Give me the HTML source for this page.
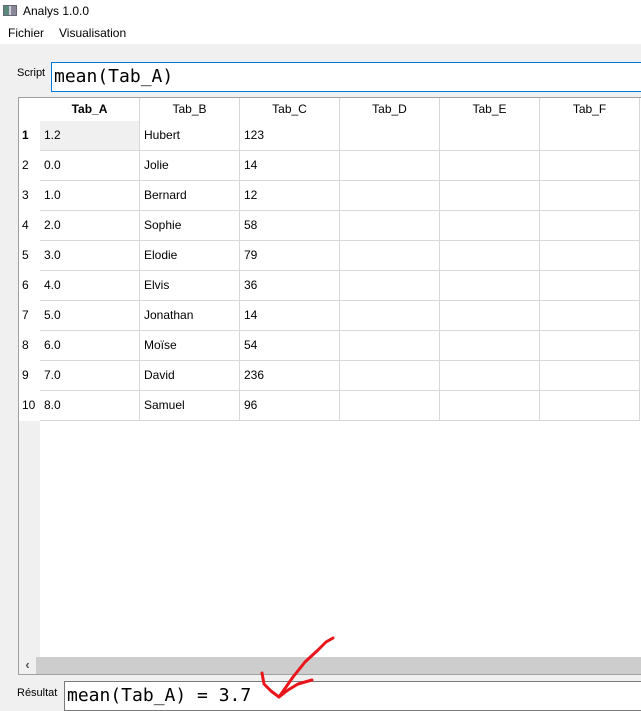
<!DOCTYPE html>
<html><head><meta charset="utf-8"><style>
*{margin:0;padding:0;box-sizing:border-box}
body{width:641px;height:705px;overflow:hidden;background:#f0f0f0;font-family:"Liberation Sans",sans-serif;font-size:12px;color:#000;position:relative}
.abs{position:absolute}
.mono{font-family:"DejaVu Sans Mono","Liberation Mono",monospace;font-size:18px}
.cell{position:absolute;height:30px;border-right:1px solid #d8d8d8;border-bottom:1px solid #d8d8d8;padding-left:4px;line-height:29px;background:#fff}
.hd{position:absolute;top:98px;height:23px;width:100px;text-align:center;line-height:23px;background:#fff;border-right:1px solid #d8d8d8}
.rh{position:absolute;left:19px;width:21px;height:30px;line-height:29px;padding-left:3px;background:#fff}
</style></head><body>
<div class="abs" style="left:0;top:0;width:641px;height:44px;background:#fff"></div>
<div class="abs" style="left:3px;top:5px;width:14px;height:11px;border:1px solid #667;background:linear-gradient(90deg,#5a8a7a 0 40%,#ccd 40% 60%,#889 60%)"></div>
<div class="abs" style="left:23px;top:4px;font-size:12px">Analys 1.0.0</div>
<div class="abs" style="left:8px;top:26px">Fichier</div>
<div class="abs" style="left:59px;top:26px">Visualisation</div>
<div class="abs" style="left:17px;top:67px;font-size:11px">Script</div>
<div class="abs mono" style="left:51px;top:62px;width:595px;height:30px;background:#fff;border:1px solid #0078d7;padding-left:2px;line-height:28px">mean(Tab_A)</div>
<div class="abs" style="left:18px;top:97px;width:630px;height:578px;border:1px solid #a0a0a0;background:#fff"></div>
<div class="abs" style="left:19px;top:421px;width:21px;height:236px;background:#f0f0f0"></div>
<div class="hd" style="left:40px;font-weight:bold">Tab_A</div>
<div class="hd" style="left:140px">Tab_B</div>
<div class="hd" style="left:240px">Tab_C</div>
<div class="hd" style="left:340px">Tab_D</div>
<div class="hd" style="left:440px">Tab_E</div>
<div class="hd" style="left:540px">Tab_F</div>
<div id="g"></div>
<div class="abs" style="left:19px;top:657px;width:622px;height:17px;background:#cdcdcd"></div>
<div class="abs" style="left:19px;top:657px;width:17px;height:17px;background:#f0f0f0;text-align:center;line-height:16px;font-size:13px;color:#555;font-weight:bold">‹</div>
<div class="abs" style="left:17px;top:687px;font-size:11px">Résultat</div>
<div class="abs mono" style="left:64px;top:681px;width:590px;height:30px;background:#fff;border:1px solid #7a7a7a;padding-left:2px;line-height:28px">mean(Tab_A) = 3.7</div>
<svg class="abs" style="left:0;top:0" width="641" height="705"><g fill="none" stroke="#e8151b" stroke-width="3" stroke-linecap="round" stroke-linejoin="round"><path d="M333 638 L326 642 L318 650 L305 662 L293 677 L279 697"/><path d="M262 673 L264 684 L271 691 L279 697 L288 690 L298 684 L312 680"/></g></svg>
<script>
var d=[["1.2","Hubert","123"],["0.0","Jolie","14"],["1.0","Bernard","12"],["2.0","Sophie","58"],["3.0","Elodie","79"],["4.0","Elvis","36"],["5.0","Jonathan","14"],["6.0","Moïse","54"],["7.0","David","236"],["8.0","Samuel","96"]];
var h="";
for(var r=0;r<10;r++){var t=121+r*30;
h+='<div class="rh" style="top:'+t+'px;'+(r==0?'font-weight:bold':'')+'">'+(r+1)+'</div>';
for(var c=0;c<6;c++){var v=c<3?d[r][c]:"";h+='<div class="cell" style="left:'+(40+c*100)+'px;top:'+t+'px;width:100px;'+(r==0&&c==0?'background:#f0f0f0':'')+'">'+v+'</div>';}}
document.getElementById("g").innerHTML=h;
</script>
</body></html>
